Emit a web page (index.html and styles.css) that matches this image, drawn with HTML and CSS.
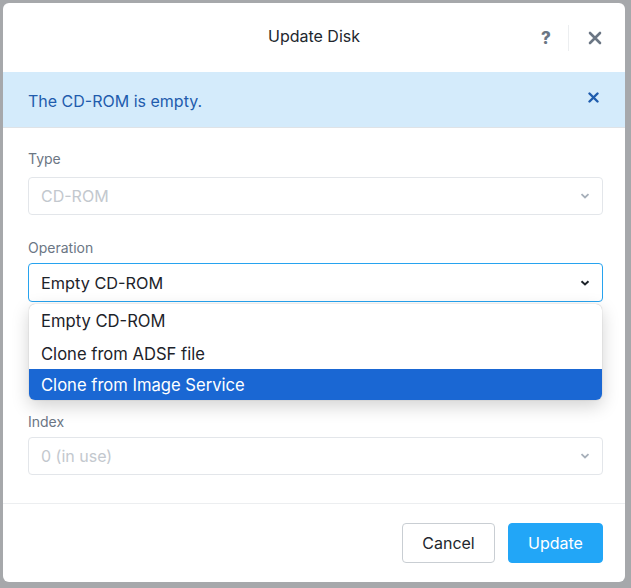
FILE: index.html
```html
<!DOCTYPE html>
<html>
<head>
<meta charset="utf-8">
<link rel="stylesheet" href="styles.css">
</head>
<body>
<div class="modal">
  <div class="header">
    <div class="title">Update Disk</div>
    <div class="hactions">
      <span class="help">?</span>
      <span class="sep"></span>
      <svg class="close" width="14" height="14" viewBox="0 0 14 14"><path d="M2 2L12 12M12 2L2 12" stroke="#6b7684" stroke-width="2.6" stroke-linecap="round"/></svg>
    </div>
  </div>
  <div class="banner">
    <span class="btext">The CD-ROM is empty.</span>
    <svg class="bclose" width="11" height="11" viewBox="0 0 11 11"><path d="M1.5 1.5L9.5 9.5M9.5 1.5L1.5 9.5" stroke="#1f5cad" stroke-width="2.4" stroke-linecap="round"/></svg>
  </div>
  <div class="body">
    <div class="field">
      <div class="label">Type</div>
      <div class="select disabled"><span>CD-ROM</span><svg class="chev" width="10" height="6" viewBox="0 0 10 6"><path d="M1.5 1.2L5 4.5L8.5 1.2" fill="none" stroke="#a7b0ba" stroke-width="1.8"/></svg></div>
    </div>
    <div class="field op">
      <div class="label">Operation</div>
      <div class="select active"><span>Empty CD-ROM</span><svg class="chev" width="10" height="6" viewBox="0 0 10 6"><path d="M1.5 1.2L5 4.5L8.5 1.2" fill="none" stroke="#1d232a" stroke-width="2"/></svg></div>
      <ul class="menu">
        <li>Empty CD-ROM</li>
        <li>Clone from ADSF file</li>
        <li class="sel">Clone from Image Service</li>
      </ul>
    </div>
    <div class="field spacer"></div>
    <div class="field">
      <div class="label">Index</div>
      <div class="select disabled"><span>0 (in use)</span><svg class="chev" width="10" height="6" viewBox="0 0 10 6"><path d="M1.5 1.2L5 4.5L8.5 1.2" fill="none" stroke="#a7b0ba" stroke-width="1.8"/></svg></div>
    </div>
  </div>
  <div class="footer">
    <button class="btn cancel">Cancel</button>
    <button class="btn primary">Update</button>
  </div>
</div>
</body>
</html>
```
FILE: styles.css
```css
html, body {
  margin: 0;
  padding: 0;
  background: #a6a8ab;
  font-family: "Inter", "Liberation Sans", sans-serif;
}
body {
  padding: 3px 6px 6px 3px;
  width: 631px;
  height: 588px;
  box-sizing: border-box;
}
.modal {
  background: #fff;
  width: 622px;
  height: 579px;
  border-radius: 6px;
  overflow: hidden;
  display: flex;
  flex-direction: column;
}
.header {
  height: 69px;
  display: flex;
  align-items: center;
  justify-content: center;
  position: relative;
}
.title {
  font-size: 16px;
  color: #22272e;
  margin-top: -3px;
}
.hactions {
  position: absolute;
  right: 22px;
  top: 22px;
  display: flex;
  align-items: center;
  height: 26px;
}
.help {
  font-size: 17px;
  font-weight: 800;
  color: #6b7684;
  width: 14px;
  text-align: center;
}
.sep {
  width: 1px;
  height: 26px;
  background: #eceef0;
  margin: 0 19px 0 15px;
}
.close { display: block; margin-right: 1px; }
.banner {
  height: 55px;
  background: #d4ebfb;
  border-bottom: 1px solid #dfe3e7;
  display: flex;
  align-items: center;
  justify-content: space-between;
  padding: 0 26px 0 25px;
}
.btext {
  font-size: 16px;
  color: #1f5cad;
  margin-top: 3px;
}
.bclose { display: block; margin-top: -4px; }
.body {
  flex: 1;
  padding: 21px 22px 0 25px;
  border-bottom: 1px solid #eceef0;
}
.field {
  margin-bottom: 21px;
  position: relative;
}
.spacer { height: 66px; }
.label {
  font-size: 14px;
  line-height: 20px;
  color: #6b7684;
  margin-bottom: 8px;
}
.field.op .label, .field:last-child .label {
  padding-top: 2px;
  margin-bottom: 5px;
}
.select {
  height: 38px;
  box-sizing: border-box;
  border: 1px solid #e3e6ea;
  border-radius: 4px;
  display: flex;
  align-items: center;
  justify-content: space-between;
  padding: 0 12px 0 12px;
  font-size: 16px;
}
.select.disabled { color: #c3c8ce; }
.select.active {
  border-color: #27a3ef;
  color: #1d232a;
  height: 39px;
  font-size: 16.3px;
}
.chev { display: block; }
.menu {
  position: absolute;
  left: 1px;
  right: 1px;
  top: 68px;
  margin: 0;
  padding: 0;
  list-style: none;
  background: #fff;
  border-radius: 6px;
  box-shadow: 0 0 1px rgba(0,0,0,0.35), 0 6px 18px rgba(0,0,0,0.18);
  overflow: hidden;
  z-index: 2;
}
.menu li {
  height: 32px;
  line-height: 34px;
  padding-left: 12px;
  font-size: 16.6px;
  color: #1d232a;
}
.menu li:first-child { height: 33px; line-height: 35px; }
.menu li.sel {
  background: #1a67d3;
  color: #fff;
  height: 31px;
  line-height: 33px;
}
.footer {
  height: 78px;
  display: flex;
  align-items: center;
  justify-content: flex-end;
  padding-right: 22px;
  gap: 13px;
}
.btn {
  height: 40px;
  border-radius: 4px;
  font-family: inherit;
  font-size: 16px;
  padding: 0;
}
.cancel {
  width: 93px;
  background: #fff;
  border: 1px solid #c9ced3;
  color: #22272e;
}
.primary {
  width: 95px;
  background: #22a6f7;
  border: 1px solid #22a6f7;
  color: #fff;
}
```
